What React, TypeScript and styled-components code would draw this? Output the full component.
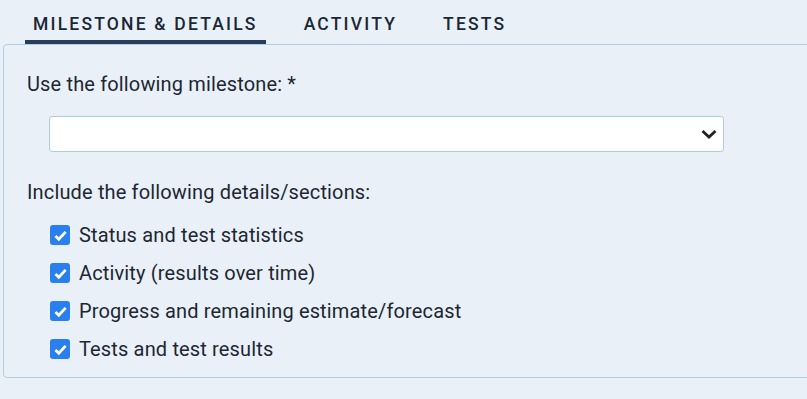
import styled, { createGlobalStyle } from "styled-components";

const GlobalStyle = createGlobalStyle`
	html, body {
		margin: 0;
		padding: 0;
		background: #e9f0f7;
		font-family: Roboto, "Liberation Sans", sans-serif;
		color: #1d2733;
		overflow: hidden;
	}
`;

const Page = styled.div`
	padding-top: 4px;
	width: 807px;
	height: 399px;
	box-sizing: border-box;
`;

const TabBar = styled.div`
	display: flex;
	align-items: flex-end;
	gap: 30px;
	padding-left: 25px;
	height: 40px;
`;

const Tab = styled.div<{ $active?: boolean }>`
	padding: 0 8px 5px;
	font-size: 17.5px;
	line-height: 22px;
	font-weight: 500;
	letter-spacing: 2.2px;
	text-transform: uppercase;
	color: #1a2735;
	border-bottom: 4px solid ${(p) => (p.$active ? "#253f5a" : "transparent")};
`;

const Panel = styled.div`
	margin-left: 3px;
	margin-right: -20px;
	border: 1px solid #b3cde2;
	border-radius: 4px;
	padding: 25px 0 17px 23px;
`;

const Label = styled.div`
	font-size: 20px;
	line-height: 28px;
	letter-spacing: 0.15px;
`;

const SelectBox = styled.div`
	display: flex;
	align-items: center;
	justify-content: flex-end;
	box-sizing: border-box;
	width: 675px;
	height: 36px;
	margin: 18px 0 26px 22px;
	padding-right: 5px;
	background: #ffffff;
	border: 1px solid #b0cde0;
	border-radius: 3px;
`;

const CheckList = styled.div`
	display: flex;
	flex-direction: column;
	gap: 16px;
	margin: 18px 0 0 23px;
`;

const CheckRow = styled.label`
	display: flex;
	align-items: center;
	gap: 9px;
	font-size: 20px;
	line-height: 22px;
	letter-spacing: 0.15px;
`;

const Box = styled.span`
	display: flex;
	align-items: center;
	justify-content: center;
	width: 20px;
	height: 20px;
	border-radius: 3px;
	background: #2a7fee;
	flex-shrink: 0;
`;

const items = [
	"Status and test statistics",
	"Activity (results over time)",
	"Progress and remaining estimate/forecast",
	"Tests and test results",
];

export default function App() {
	return (
		<Page>
			<GlobalStyle />
			<TabBar>
				<Tab $active>Milestone &amp; Details</Tab>
				<Tab>Activity</Tab>
				<Tab>Tests</Tab>
			</TabBar>
			<Panel>
				<Label>Use the following milestone: *</Label>
				<SelectBox>
					<svg width="18" height="18" viewBox="0 0 18 18">
						<path d="M2.5 6 L9 12 L15.5 6" fill="none" stroke="#222" strokeWidth="2.8" />
					</svg>
				</SelectBox>
				<Label>Include the following details/sections:</Label>
				<CheckList>
					{items.map((item) => (
						<CheckRow key={item}>
							<Box>
								<svg width="15" height="15" viewBox="0 0 14 14">
									<path d="M2.3 7.4 L5.4 10.4 L11.8 3.6" fill="none" stroke="#fff" strokeWidth="2.6" />
								</svg>
							</Box>
							{item}
						</CheckRow>
					))}
				</CheckList>
			</Panel>
		</Page>
	);
}
